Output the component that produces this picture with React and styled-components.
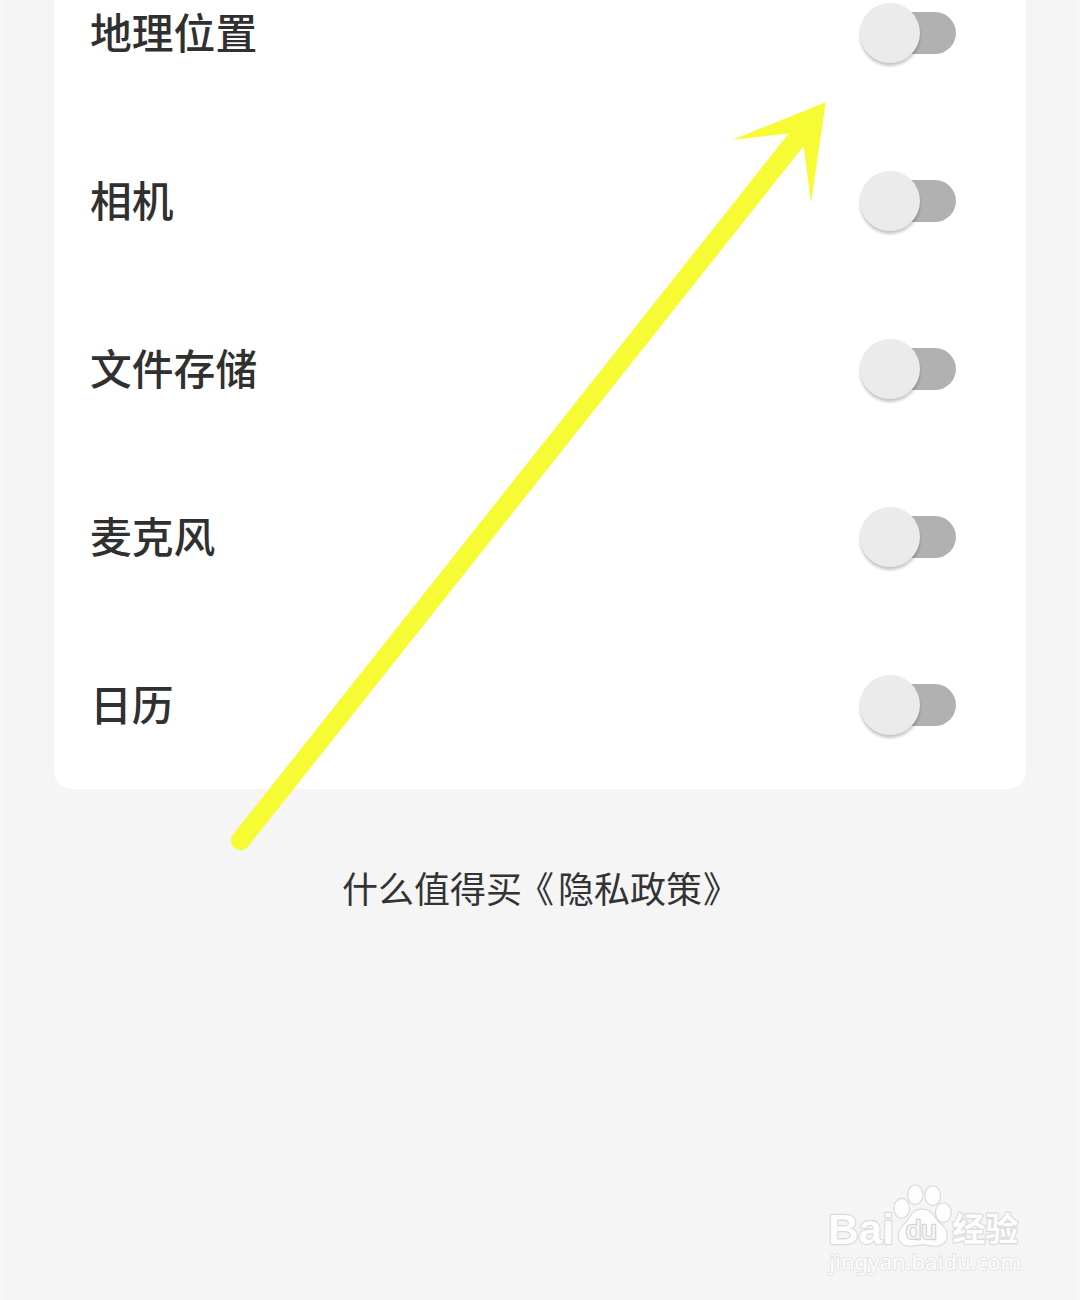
import React from "react";
import styled, { createGlobalStyle } from "styled-components";

const permissions = ["地理位置", "相机", "文件存储", "麦克风", "日历"];

const GlobalStyle = createGlobalStyle`
  * {
    box-sizing: border-box;
  }

  body {
    margin: 0;
    background: #f5f5f5;
    font-family: "Noto Sans CJK SC", sans-serif;
  }
`;

const Page = styled.main`
  position: relative;
  height: 1300px;
  padding: 0 52px;
  overflow: hidden;
  background: #f5f5f5;
  border-left: 2px solid #f8f8f8;
  border-right: 2px solid #f8f8f8;
`;

/* the list is scrolled, so its first row is cut by the top edge */
const Card = styled.section`
  margin-top: -51px;
  background: #fff;
  border-radius: 18px;
`;

const Row = styled.div`
  display: flex;
  align-items: center;
  justify-content: space-between;
  height: 168px;
  padding: 0 70px 0 36px;
`;

const Label = styled.span`
  padding-bottom: 4px;
  color: #303030;
  font-size: 41.8px;
  font-weight: 500;
  line-height: 60px;
`;

const Switch = styled.button`
  display: flex;
  align-items: center;
  width: 96px;
  height: 60px;
  padding: 0;
  border: 0;
  background: none;
`;

const Knob = styled.span`
  z-index: 1;
  flex: none;
  width: 60px;
  height: 60px;
  border-radius: 50%;
  background: #ebebeb;
  box-shadow: 0 3px 3px rgba(0, 0, 0, 0.22);
`;

const Track = styled.span`
  flex: none;
  width: 84px;
  height: 42px;
  margin-left: -48px;
  border-radius: 21px;
  background: #b1b1b1;
`;

const Policy = styled.p`
  margin: 72px 0 0;
  color: #333;
  font-size: 36px;
  line-height: 52px;
  text-align: center;
`;

const Bracket = styled.span`
  margin-left: ${({ $shift }) => $shift}px;
  margin-right: ${({ $shift }) => -$shift}px;
`;

const Arrow = styled.svg`
  position: absolute;
  top: 0;
  left: -2px;
  pointer-events: none;
`;

const Watermark = styled.svg`
  position: absolute;
  top: 1170px;
  left: 808px;
  fill: #fdfdfd;
  stroke: #dadada;
  stroke-width: 7px;
  paint-order: stroke;
  stroke-linejoin: round;
`;

const PermissionRow = ({ name }) => {
  return (
    <Row>
      <Label>{name}</Label>
      <Switch type="button" role="switch" aria-checked="false" aria-label={name}>
        <Knob />
        <Track />
      </Switch>
    </Row>
  );
};

const BaiduMark = () => {
  return (
    <Watermark width="230" height="120" viewBox="0 0 690 360">
      <text x="54" y="222" fontFamily="Liberation Sans, sans-serif" fontWeight="700" fontSize="130" textLength="198" lengthAdjust="spacingAndGlyphs">Bai</text>
      <ellipse cx="275" cy="115" rx="22" ry="28" />
      <ellipse cx="316" cy="74" rx="21" ry="28" />
      <ellipse cx="368" cy="77" rx="22" ry="28" />
      <ellipse cx="400" cy="128" rx="22" ry="28" />
      <path d="M336 119C315 119 306 131 296 148C286 165 267 173 267 197C267 216 280 227 300 227C315 227 323 223 337 223C352 223 360 227 376 227C397 227 410 215 410 195C410 172 389 165 378 148C367 131 357 119 336 119Z" />
      <text x="287" y="207" fontFamily="Liberation Sans, sans-serif" fontSize="77" fill="#f6f6f6" stroke="#d2d2d2" textLength="93" lengthAdjust="spacingAndGlyphs">du</text>
      <text x="427" y="213" fontFamily="Noto Sans CJK SC, sans-serif" fontWeight="700" fontSize="99">经验</text>
      <text x="58" y="300" fontFamily="Noto Sans, sans-serif" fontSize="66" strokeWidth="5" stroke="#e0e0e0" textLength="576" lengthAdjust="spacingAndGlyphs">jingyan.baidu.com</text>
    </Watermark>
  );
};

const App = () => {
  return (
    <>
      <GlobalStyle />
      <Page>
        <Card>
          {permissions.map((name) => (
            <PermissionRow key={name} name={name} />
          ))}
        </Card>
        <Policy>
          什么值得买<Bracket $shift={-4}>《</Bracket>隐私政策<Bracket $shift={1}>》</Bracket>
        </Policy>
        <Arrow width="1080" height="1300" viewBox="0 0 1080 1300">
          <path
            fill="#f7fb33"
            d="M825.7 102.3L732 140L788.7 133.5L233 834.6A9.6 9.6 0 0 0 248 846.6L803.7 146L811 203Z"
          />
        </Arrow>
        <BaiduMark />
      </Page>
    </>
  );
};

export default App;
